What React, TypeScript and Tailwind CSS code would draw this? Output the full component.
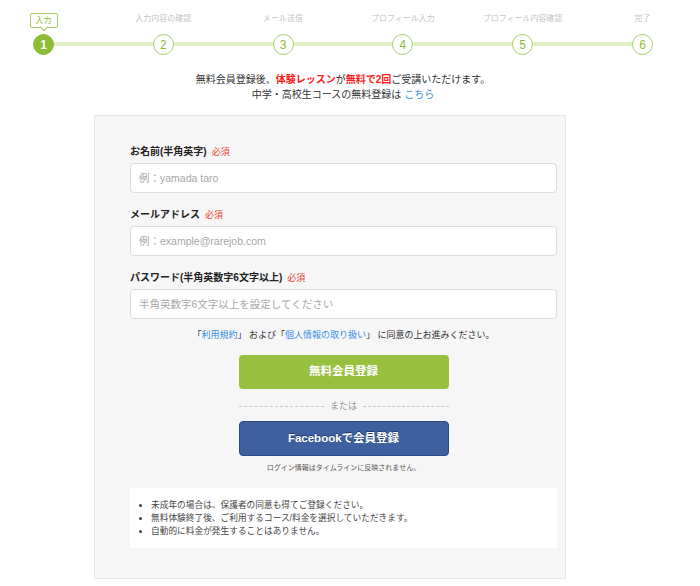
import React from 'react';

const font = { fontFamily: '"Liberation Sans", "Noto Sans CJK JP", sans-serif' };

const steps = ['入力', '入力内容の確認', 'メール送信', 'プロフィール入力', 'プロフィール内容確認', '完了'];

const Stepper = () => (
  <div className="relative h-[58px] pl-[33px] pr-[33px] pt-[34px]">
    <div className="relative flex justify-between">
      <div className="absolute left-[10px] right-[10px] top-[8px] h-[4px] bg-[#e1eec4]" />
      {steps.map((label, i) => (
        <div key={label} className="relative w-[21px] h-[21px]">
          {i === 0 ? (
            <div className="absolute left-1/2 -translate-x-1/2 -top-[21px] flex flex-col items-center">
              <div className="px-[5px] h-[15px] leading-[13px] text-[8px] text-[#8dbb35] bg-white border border-[#a5cc68] rounded-[2px] whitespace-nowrap">
                {label}
              </div>
              <div className="w-[6px] h-[6px] bg-white border-r border-b border-[#a5cc68] rotate-45 -mt-[4px]" />
            </div>
          ) : (
            <div className="absolute left-1/2 -translate-x-1/2 -top-[21px] text-[8px] text-[#c4c4c4] whitespace-nowrap">
              {label}
            </div>
          )}
          <div
            className={
              i === 0
                ? 'relative w-[21px] h-[21px] rounded-full bg-[#8dbb35] border-[1.5px] border-[#8dbb35] text-white flex items-center justify-center text-[12px] font-bold'
                : 'relative w-[21px] h-[21px] rounded-full bg-white border-[1.5px] border-[#a5cc68] text-[#8dbb35] flex items-center justify-center text-[12px]'
            }
          >
            {i + 1}
          </div>
        </div>
      ))}
    </div>
  </div>
);

const Field = ({ label, placeholder, type = 'text' }: { label: string; placeholder: string; type?: string }) => (
  <div className="mb-[14px]">
    <div className="flex items-baseline gap-[5px] h-[14px] mb-[5px]">
      <span className="text-[10px] font-bold text-[#222]">{label}</span>
      <span className="text-[9px] text-[#e8463c]">必須</span>
    </div>
    <input
      type={type}
      placeholder={placeholder}
      className="w-full h-[30px] px-[8px] bg-white border border-[#dcdcdc] rounded-[4px] text-[10.5px] placeholder:text-[#a8a8a8] outline-none"
    />
  </div>
);

export default function App() {
  return (
    <div className="w-[686px] bg-white h-[586px] text-[#333]" style={font}>
      <Stepper />

      <div className="text-center text-[10px] leading-[15px] mt-[14px]">
        <p>
          無料会員登録後、<span className="text-[#ff1a1a] font-bold">体験レッスン</span>が
          <span className="text-[#ff1a1a] font-bold">無料で2回</span>ご受講いただけます。
        </p>
        <p>
          中学・高校生コースの無料登録は <a className="text-[#3a8ee6]">こちら</a>
        </p>
      </div>

      <div className="ml-[94px] mt-[13px] w-[472px] h-[464px] bg-[#f6f6f6] border border-[#e6e6e6] pl-[35px] pr-[8px] pt-[28px]">
        <Field label="お名前(半角英字)" placeholder="例：yamada taro" />
        <Field label="メールアドレス" placeholder="例：example@rarejob.com" type="email" />
        <Field label="パスワード(半角英数字6文字以上)" placeholder="半角英数字6文字以上を設定してください" type="password" />

        <p className="-mt-[4px] text-center text-[9px] text-[#333]">
          「<a className="text-[#3a8ee6]">利用規約</a>」 および「<a className="text-[#3a8ee6]">個人情報の取り扱い</a>」 に同意の上お進みください。
        </p>

        <div className="flex flex-col items-center mt-[12px]">
          <button className="w-[210px] h-[34px] rounded-[4px] bg-[#96c03e] text-white text-[11.5px] font-bold">
            無料会員登録
          </button>
          <div className="w-[210px] flex items-center gap-[6px] mt-[11px] mb-[8px] text-[9px] text-[#999]">
            <div className="flex-1 border-t border-dashed border-[#c8c8c8]" />
            <span>または</span>
            <div className="flex-1 border-t border-dashed border-[#c8c8c8]" />
          </div>
          <button className="w-[210px] h-[35px] rounded-[4px] bg-[#3e609e] border border-[#2c4b86] text-white text-[11.5px] font-bold [text-shadow:0_-1px_0_#1f3a6e]">
            Facebookで会員登録
          </button>
          <p className="mt-[7px] text-[7px] text-[#555]">ログイン情報はタイムラインに反映されません。</p>
        </div>

        <ul className="mt-[14px] bg-white h-[60px] pt-[11px] pl-[21px] list-disc text-[8.7px] leading-[13px] text-[#444]">
          <li>未成年の場合は、保護者の同意も得てご登録ください。</li>
          <li>無料体験終了後、ご利用するコース/料金を選択していただきます。</li>
          <li>自動的に料金が発生することはありません。</li>
        </ul>
      </div>
    </div>
  );
}
